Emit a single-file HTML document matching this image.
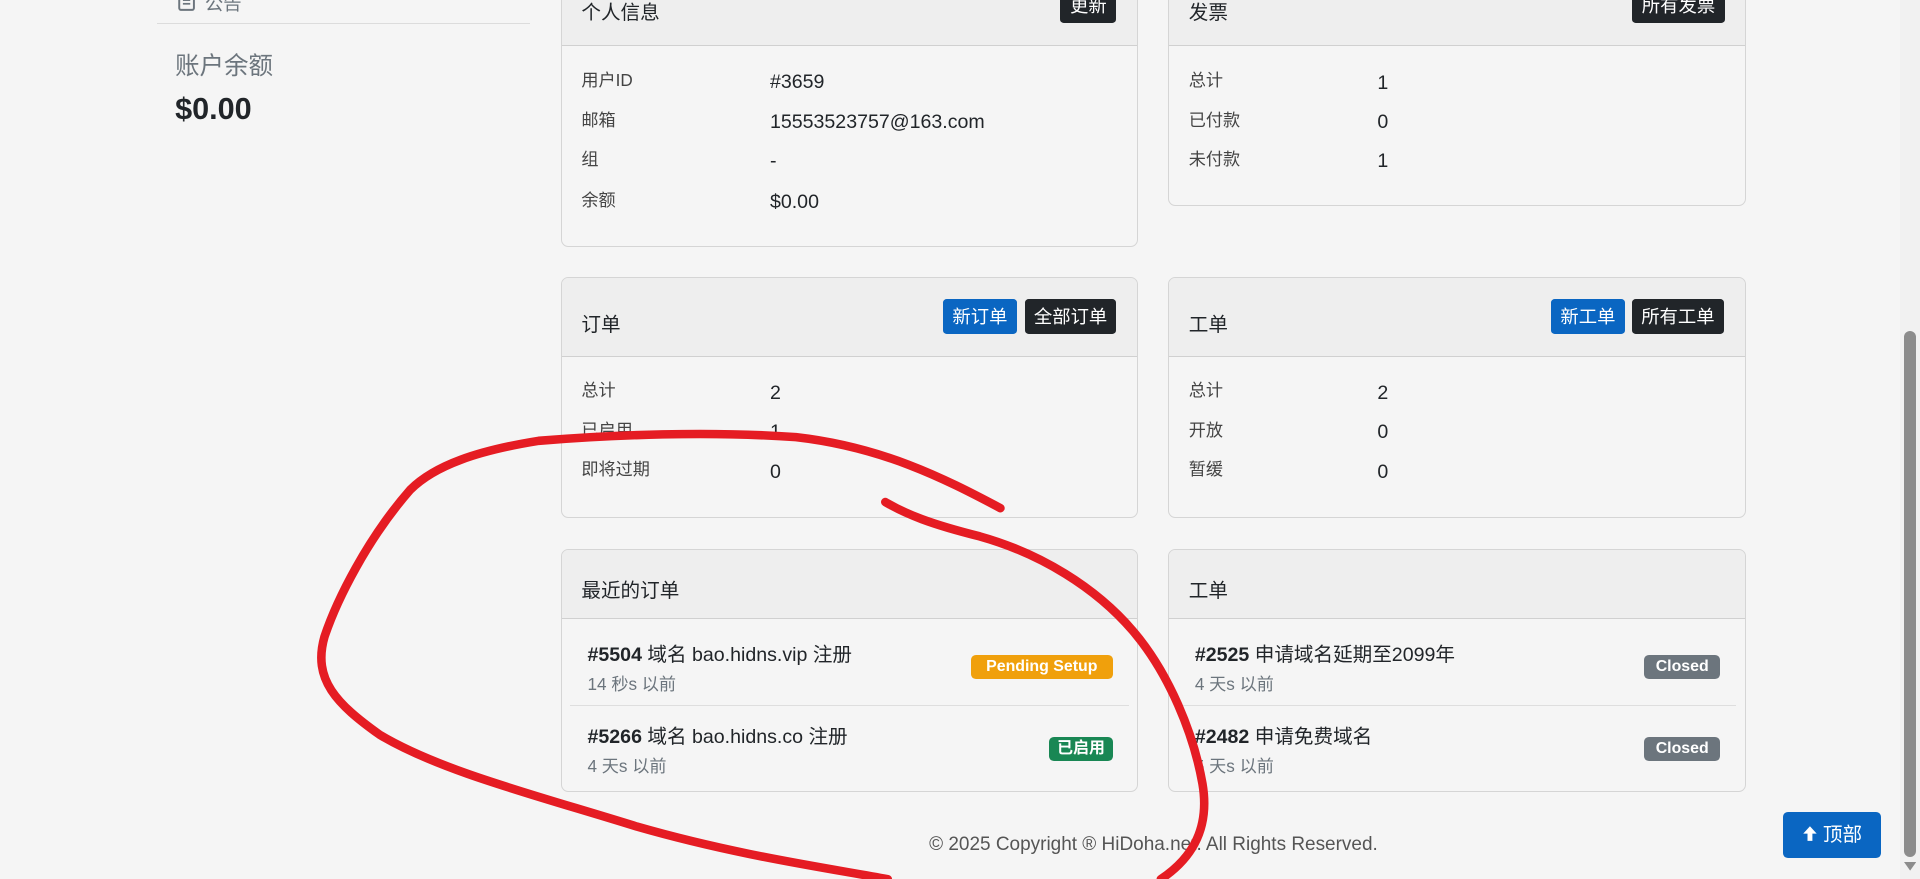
<!DOCTYPE html>
<html><head><meta charset="utf-8">
<style>
html,body{margin:0;padding:0;background:#f5f5f5;overflow:hidden}
body{zoom:1.22449;width:1568px;height:718px;position:relative;font-family:"Liberation Sans","Noto Sans CJK SC",sans-serif;color:#212529}
.card{position:absolute;border:1px solid #d5d5d5;border-radius:6px;background:#f5f5f5;overflow:hidden}
.hd{background:#eeeeee;border-bottom:1px solid #d0d0d0;position:relative;font-size:16px}
.hd .t{position:absolute;left:16px}
.btn{position:absolute;color:#fff;font-size:15px;border-radius:3px;text-align:center;line-height:29px;height:29px}
.blue{background:#0a66c2}
.dark{background:#212529}
.lb{position:absolute;left:16px;color:#444;font-size:14px;margin-top:-3px}
.val{position:absolute;left:170px;font-size:16px}
.item{position:absolute;left:0;right:0}
.item .ti{position:absolute;left:21px;top:15px;font-size:16px}
.item .sub{position:absolute;left:21px;top:41px;font-size:14px;color:#6c757d}
.badge{position:absolute;color:#fff;font-weight:bold;font-size:13px;border-radius:4px;text-align:center;height:20px;line-height:20px}
</style></head><body>

<!-- sidebar -->
<div style="position:absolute;left:145px;top:-8px;font-size:15px;color:#6c757d">
<svg width="14" height="14" viewBox="0 0 14 14" style="vertical-align:-1px"><rect x="1" y="1" width="12" height="12" rx="1.5" fill="none" stroke="#6c757d" stroke-width="1.6"/><line x1="4" y1="5" x2="10" y2="5" stroke="#6c757d" stroke-width="1.4"/><line x1="4" y1="8" x2="10" y2="8" stroke="#6c757d" stroke-width="1.4"/></svg>&nbsp; 公告</div>
<div style="position:absolute;left:128px;top:19px;width:305px;height:1px;background:#dcdcdc"></div>
<div style="position:absolute;left:143px;top:38px;font-size:20px;color:#6c757d">账户余额</div>
<div style="position:absolute;left:143px;top:75px;font-size:25px;font-weight:bold">$0.00</div>

<!-- 个人信息 -->
<div class="card" style="left:458px;top:-30px;width:470px;height:230px">
 <div class="hd" style="height:66px"><span class="t" style="top:26px">个人信息</span>
  <div class="btn dark" style="left:407px;top:20px;width:46px;height:28px;line-height:28px">更新</div></div>
 <div class="lb" style="top:86px">用户ID</div><div class="val" style="top:87px">#3659</div>
 <div class="lb" style="top:119px">邮箱</div><div class="val" style="top:120px">15553523757@163.com</div>
 <div class="lb" style="top:151px">组</div><div class="val" style="top:152px">-</div>
 <div class="lb" style="top:184px">余额</div><div class="val" style="top:185px">$0.00</div>
</div>

<!-- 发票 -->
<div class="card" style="left:954px;top:-30px;width:470px;height:197px">
 <div class="hd" style="height:66px"><span class="t" style="top:26px">发票</span>
  <div class="btn dark" style="left:378px;top:20px;width:76px;height:28px;line-height:28px">所有发票</div></div>
 <div class="lb" style="top:86px">总计</div><div class="val" style="top:88px">1</div>
 <div class="lb" style="top:119px">已付款</div><div class="val" style="top:120px">0</div>
 <div class="lb" style="top:151px">未付款</div><div class="val" style="top:152px">1</div>
</div>

<!-- 订单 -->
<div class="card" style="left:458px;top:226px;width:470px;height:195px">
 <div class="hd" style="height:64px"><span class="t" style="top:25px">订单</span>
  <div class="btn blue" style="left:311px;top:17px;width:61px">新订单</div>
  <div class="btn dark" style="left:378px;top:17px;width:75px">全部订单</div></div>
 <div class="lb" style="top:83px">总计</div><div class="val" style="top:85px">2</div>
 <div class="lb" style="top:116px">已启用</div><div class="val" style="top:117px">1</div>
 <div class="lb" style="top:148px">即将过期</div><div class="val" style="top:150px">0</div>
</div>

<!-- 工单 -->
<div class="card" style="left:954px;top:226px;width:470px;height:195px">
 <div class="hd" style="height:64px"><span class="t" style="top:25px">工单</span>
  <div class="btn blue" style="left:312px;top:17px;width:60px">新工单</div>
  <div class="btn dark" style="left:378px;top:17px;width:75px">所有工单</div></div>
 <div class="lb" style="top:83px">总计</div><div class="val" style="top:85px">2</div>
 <div class="lb" style="top:116px">开放</div><div class="val" style="top:117px">0</div>
 <div class="lb" style="top:148px">暂缓</div><div class="val" style="top:150px">0</div>
</div>

<!-- 最近的订单 -->
<div class="card" style="left:458px;top:448px;width:470px;height:197px">
 <div class="hd" style="height:56px"><span class="t" style="top:20px">最近的订单</span></div>
 <div class="item" style="top:57px;height:70px">
  <div class="ti"><b>#5504</b> 域名 bao.hidns.vip 注册</div>
  <div class="sub">14 秒s 以前</div>
  <div class="badge" style="left:334px;top:29px;width:116px;background:#f0a00c">Pending Setup</div>
 </div>
 <div style="position:absolute;left:7px;right:7px;top:127px;height:1px;background:#dedede"></div>
 <div class="item" style="top:124px;height:70px">
  <div class="ti"><b>#5266</b> 域名 bao.hidns.co 注册</div>
  <div class="sub">4 天s 以前</div>
  <div class="badge" style="left:398px;top:29px;width:52px;background:#198754">已启用</div>
 </div>
</div>

<!-- 工单 list -->
<div class="card" style="left:954px;top:448px;width:470px;height:197px">
 <div class="hd" style="height:56px"><span class="t" style="top:20px">工单</span></div>
 <div class="item" style="top:57px;height:70px">
  <div class="ti"><b>#2525</b> 申请域名延期至2099年</div>
  <div class="sub">4 天s 以前</div>
  <div class="badge" style="left:388px;top:29px;width:62px;background:#6c757d">Closed</div>
 </div>
 <div style="position:absolute;left:7px;right:7px;top:127px;height:1px;background:#dedede"></div>
 <div class="item" style="top:124px;height:70px">
  <div class="ti"><b>#2482</b> 申请免费域名</div>
  <div class="sub">5 天s 以前</div>
  <div class="badge" style="left:388px;top:29px;width:62px;background:#6c757d">Closed</div>
 </div>
</div>

<!-- footer -->
<div style="position:absolute;left:600px;width:684px;top:681px;text-align:center;font-size:15.5px;color:#555">© 2025 Copyright ® HiDoha.net. All Rights Reserved.</div>

<div style="position:absolute;left:1456px;top:663px;width:80px;height:38px;background:#0a66c2;border-radius:4px;color:#fff;font-size:16px;line-height:38px;text-align:center">
<svg width="13" height="14" viewBox="0 0 13 14" style="vertical-align:-1px"><path d="M6.5 1 L12 7 H8.5 V13 H4.5 V7 H1 Z" fill="#fff"/></svg> 顶部</div>

<!-- scrollbar -->
<div style="position:absolute;left:1552px;top:0;width:16px;height:718px;background:#f1f1f1"></div>
<div style="position:absolute;left:1555px;top:270px;width:10px;height:430px;background:#8c8c8c;border-radius:5px"></div>
<svg style="position:absolute;left:1555px;top:704px" width="10" height="8"><path d="M0 0 H10 L5 7 Z" fill="#8c8c8c"/></svg>

<!-- red annotation -->
<svg style="position:absolute;left:0;top:0" width="1568" height="718">
<path d="M817 415 C770 390 720 365 650 357 C580 352 500 355 440 360 C390 368 355 380 335 400 C300 440 275 490 265 520 C255 555 275 575 310 600 C360 630 440 650 520 675 C600 698 670 708 725 718" fill="none" stroke="#e51c23" stroke-width="7" stroke-linecap="round"/>
<path d="M723 410 C740 420 760 428 800 438 C850 452 895 480 925 515 C955 550 975 600 982 640 C988 675 975 700 948 718" fill="none" stroke="#e51c23" stroke-width="7" stroke-linecap="round"/>
</svg>
</body></html>
